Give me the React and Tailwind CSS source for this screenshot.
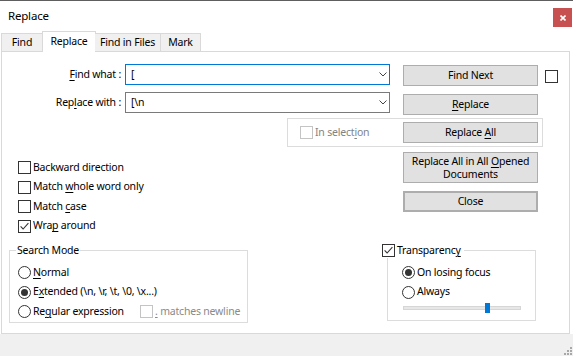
import React from 'react';

const U = ({ children }) => <span className="underline underline-offset-[2px] decoration-[1px]">{children}</span>;

function Check({ checked, disabled }) {
  const c = disabled ? '#c4c4c4' : '#333333';
  return (
    <svg width="13" height="13" viewBox="0 0 13 13" className="shrink-0">
      <rect x="0.5" y="0.5" width="12" height="12" fill="#fff" stroke={c} />
      {checked && <path d="M2.6 6.4 L5.1 9 L10.4 3.2" fill="none" stroke="#333" strokeWidth="1.1" />}
    </svg>
  );
}

function Radio({ checked }) {
  return (
    <svg width="13" height="13" viewBox="0 0 13 13" className="shrink-0">
      <circle cx="6.5" cy="6.5" r="6" fill="#fff" stroke="#333" />
      {checked && <circle cx="6.5" cy="6.5" r="3.5" fill="#333" />}
    </svg>
  );
}

function Btn({ children, className = '' }) {
  return (
    <div className={`flex items-center justify-center bg-[#e1e1e1] border border-[#adadad] text-center leading-[13px] ${className}`}>
      {children}
    </div>
  );
}

function Combo({ value, focused }) {
  return (
    <div className={`flex items-center ml-[3px] w-[265px] h-[21px] bg-white border ${focused ? 'border-[#0078d7]' : 'border-[#7a7a7a]'}`}>
      <span className="pl-[5px] flex-1 whitespace-pre">{value}</span>
      <svg width="8" height="5" viewBox="0 0 8 5" className="mr-[2px]">
        <path d="M0.5 0.5 L4 4 L7.5 0.5" fill="none" stroke="#444" strokeWidth="1" />
      </svg>
    </div>
  );
}

function OptRow({ children }) {
  return <div className="flex items-center h-[19.5px] gap-[2px]">{children}</div>;
}

export default function App() {
  return (
    <div className="w-[573px] h-[356px] flex flex-col bg-white border-t border-[#5e5e5e] text-[10.5px] tracking-[-0.2px] whitespace-nowrap text-black font-['Segoe_UI','Noto_Sans',sans-serif] overflow-hidden">
      {/* title bar */}
      <div className="flex items-start justify-between h-[30px] shrink-0">
        <div className="pl-[8px] pt-[6px] leading-[18px] text-[11.5px]">Replace</div>
        <div className="mt-[7px] mr-[1px] w-[19px] h-[19px] bg-[#c75050] flex items-center justify-center">
          <svg width="6" height="6" viewBox="0 0 6 6">
            <path d="M0.5 0.5 L5.5 5.5 M5.5 0.5 L0.5 5.5" stroke="#fff" strokeWidth="1.6" />
          </svg>
        </div>
      </div>

      {/* tabs */}
      <div className="relative z-10 flex items-end h-[20px] pl-[1px] shrink-0">
        <div className="w-[42px] h-[18px] flex items-center justify-center pt-[1px] bg-[#f0f0f0] border-t border-l border-r border-[#d9d9d9]">Find</div>
        <div className="-ml-[1px] -mb-[1px] w-[54px] h-[21px] flex items-center justify-center pb-[1px] bg-white border-t border-l border-r border-[#d9d9d9]">Replace</div>
        <div className="-ml-[1px] w-[66px] h-[18px] flex items-center justify-center pt-[1px] bg-[#f0f0f0] border-t border-r border-[#d9d9d9]">Find in Files</div>
        <div className="w-[40px] h-[18px] flex items-center justify-center pt-[1px] bg-[#f0f0f0] border-t border-r border-[#d9d9d9]">Mark</div>
      </div>

      {/* panel */}
      <div className="ml-[1px] w-[569px] h-[283px] shrink-0 flex flex-col bg-white border border-[#d9d9d9]">
        <div className="mt-[12px] flex items-start h-[21px]">
          <div className="w-[120px] h-[21px] flex items-center justify-end pr-[1px]"><span><U>F</U>ind what :</span></div>
          <Combo value="[" focused />
          <Btn className="ml-[13px] mt-[1px] w-[135px] h-[21px]">Find Next</Btn>
          <div className="ml-[7px] mt-[6px]"><Check /></div>
        </div>

        <div className="mt-[7px] flex items-start h-[23px]">
          <div className="w-[120px] h-[21px] flex items-center justify-end pr-[1px]"><span>Rep<U>l</U>ace with :</span></div>
          <Combo value="[\n" />
          <Btn className="ml-[13px] mt-[2px] w-[135px] h-[21px]"><span><U>R</U>eplace</span></Btn>
        </div>

        <div className="mt-[3px] ml-[285px] w-[256px] h-[29px] flex items-center border border-[#dcdcdc]">
          <div className="ml-[12px]"><Check disabled /></div>
          <span className="ml-[2px] text-[#838383]">In select<U>i</U>on</span>
          <Btn className="ml-auto mr-[4px] w-[135px] h-[21px]"><span>Replace <U>A</U>ll</span></Btn>
        </div>

        <div className="flex items-start">
          <div className="ml-[16px] w-[385px] mt-[11px] flex flex-col">
            <OptRow><Check /><span>Backward direction</span></OptRow>
            <OptRow><Check /><span>Match <U>w</U>hole word only</span></OptRow>
            <OptRow><Check /><span>Match <U>c</U>ase</span></OptRow>
            <OptRow><Check checked /><span>Wra<U>p</U> around</span></OptRow>
          </div>
          <div className="mt-[5px] flex flex-col">
            <Btn className="w-[135px] h-[31px] pt-[1px]"><span>Replace All in All <U>O</U>pened<br />Documents</span></Btn>
            <Btn className="mt-[8px] w-[135px] h-[21px] border-2 border-[#0078d7]">Close</Btn>
          </div>
        </div>

        <div className="mt-[7px] flex items-start">
          <fieldset className="ml-[7px] w-[239px] border border-[#dcdcdc] pl-[8px]">
            <legend className="ml-[-2px] px-[1px] leading-[15px]">Search Mode</legend>
            <div className="mt-[5px] flex flex-col">
              <OptRow><Radio /><span><U>N</U>ormal</span></OptRow>
              <OptRow><Radio checked /><span>E<U>x</U>tended (\n, \r, \t, \0, \x...)</span></OptRow>
              <div className="flex items-center h-[19.5px]">
                <div className="w-[120px] flex items-center gap-[2px]"><Radio /><span>Re<U>g</U>ular expression</span></div>
                <div className="ml-[2px]"><Check disabled /></div>
                <span className="ml-[2px] text-[#8a8a8a]"><U>.</U> matches newline</span>
              </div>
            </div>
          </fieldset>

          <fieldset className="ml-[139px] w-[149px] border border-[#dcdcdc] pl-[14px]">
            <legend className="-ml-[20px] pr-[3px] leading-[15px] flex items-center">
              <Check checked />
              <span className="ml-[2px]">Transparenc<U>y</U></span>
            </legend>
            <div className="mt-[5px] flex flex-col">
              <OptRow><Radio checked /><span>On losing focus</span></OptRow>
              <OptRow><Radio /><span>Always</span></OptRow>
            </div>
            <div className="mt-[4px] ml-[1px] mb-[10px] relative w-[118px] h-[4px] bg-[#e7e7e7] border border-[#d6d6d6]">
              <div className="absolute left-[81px] top-[-4px] w-[5px] h-[10px] bg-[#0078d7]" />
            </div>
          </fieldset>
        </div>
      </div>

      {/* footer */}
      <div className="flex-1 bg-[#f0f0f0] flex justify-end items-end pr-[1px] pb-[1px]">
        <svg width="9" height="9" viewBox="0 0 9 9">
          <g fill="#a8a8a8">
            <rect x="7" y="1" width="2" height="2" />
            <rect x="4" y="4" width="2" height="2" />
            <rect x="7" y="4" width="2" height="2" />
            <rect x="1" y="7" width="2" height="2" />
            <rect x="4" y="7" width="2" height="2" />
            <rect x="7" y="7" width="2" height="2" />
          </g>
        </svg>
      </div>
    </div>
  );
}
